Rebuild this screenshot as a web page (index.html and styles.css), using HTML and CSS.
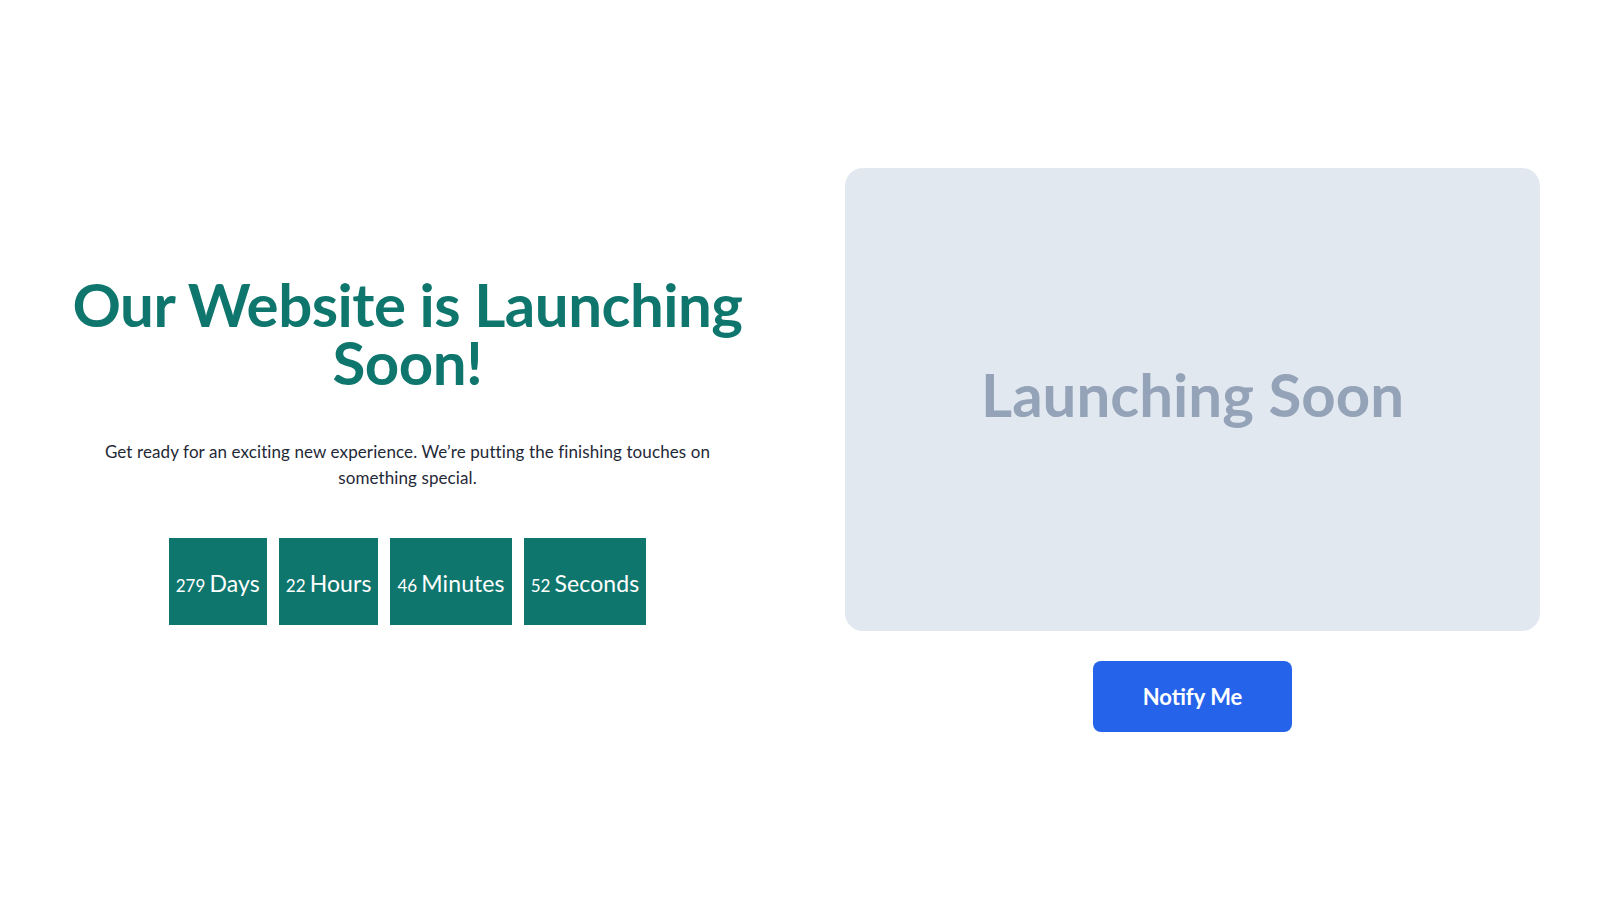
FILE: index.html
```html
<!DOCTYPE html>
<html lang="en">
<head>
<meta charset="utf-8">
<title>Launching Soon</title>
<link rel="stylesheet" href="styles.css">
</head>
<body>
<main class="page">
  <section class="intro">
    <h1 class="title">Our Website is Launching Soon!</h1>
    <p class="lead">Get ready for an exciting new experience. We’re putting the finishing touches on something special.</p>
    <div class="countdown">
      <div class="unit"><span class="num">279</span> <span class="label">Days</span></div>
      <div class="unit"><span class="num">22</span> <span class="label">Hours</span></div>
      <div class="unit"><span class="num">46</span> <span class="label">Minutes</span></div>
      <div class="unit"><span class="num">52</span> <span class="label">Seconds</span></div>
    </div>
  </section>
  <section class="visual">
    <div class="card"><span class="card-text">Launching Soon</span></div>
    <button class="notify" type="button">Notify Me</button>
  </section>
</main>
</body>
</html>
```

FILE: styles.css
```css
* { box-sizing: border-box; }
html, body { margin: 0; padding: 0; }
body {
  background: #ffffff;
  font-family: Lato, "Noto Sans", sans-serif;
  color: #1f2937;
}
.page {
  min-height: 100vh;
  display: grid;
  grid-template-columns: 1fr 1fr;
  column-gap: 90px;
  padding: 0 60px;
  align-items: center;
}
.intro {
  display: flex;
  flex-direction: column;
  align-items: center;
  text-align: center;
}
.title {
  margin: 0;
  font-size: 60px;
  line-height: 58px;
  font-weight: 700;
  color: #0f766e;
  letter-spacing: -0.5px;
}
.lead {
  margin: 48px 0 0;
  max-width: 640px;
  font-size: 17px;
  line-height: 25.5px;
  letter-spacing: 0.1px;
  color: #1f2937;
}
.countdown {
  margin-top: 48px;
  display: flex;
  gap: 12px;
}
.unit {
  background: #0f766e;
  color: #ffffff;
  height: 87px;
  padding: 29px 7px 0;
  line-height: 32px;
  white-space: nowrap;
}
.num { font-size: 17px; }
.label { font-size: 23px; letter-spacing: 0.1px; }
.visual {
  display: flex;
  flex-direction: column;
  align-items: center;
  gap: 30px;
}
.card {
  width: 100%;
  height: 463px;
  padding-bottom: 12px;
  background: #e2e8f0;
  border-radius: 18px;
  display: flex;
  align-items: center;
  justify-content: center;
}
.card-text {
  font-family: Lato, sans-serif;
  font-size: 60px;
  font-weight: 700;
  color: #94a3b8;
}
.notify {
  background: #2563eb;
  color: #ffffff;
  border: none;
  border-radius: 8px;
  padding: 20px 50px;
  font-family: Lato, sans-serif;
  font-size: 22px;
  line-height: 31px;
  font-weight: 700;
  cursor: pointer;
}
```
